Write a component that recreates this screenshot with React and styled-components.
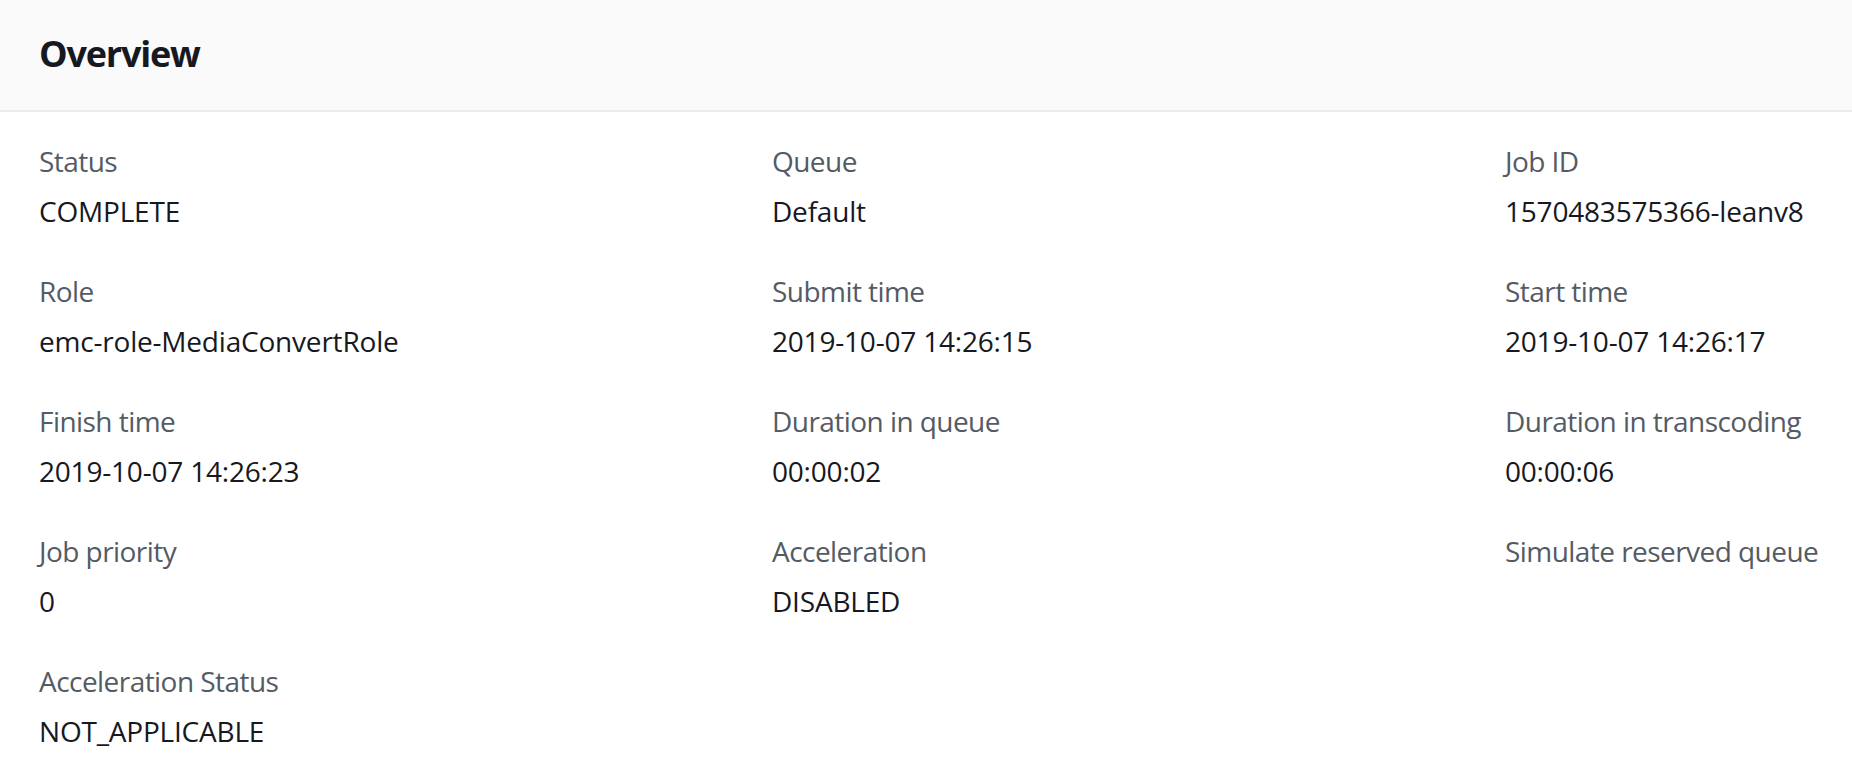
import React from "react";
import styled, { createGlobalStyle } from "styled-components";

const Global = createGlobalStyle`
  html, body { margin: 0; padding: 0; background: #ffffff; }
  body { font-family: "Open Sans", "Noto Sans", sans-serif; overflow: hidden; }
`;

const Panel = styled.section`
  width: 1852px;
  min-height: 772px;
  background: #ffffff;
`;

const Header = styled.header`
  height: 110px;
  box-sizing: content-box;
  padding: 0 39px;
  background: #fafafa;
  border-bottom: 2px solid #eaeded;
  display: flex;
  align-items: center;
`;

const Title = styled.h2`
  margin: 0;
  padding-bottom: 3px;
  font-size: 36px;
  line-height: 44px;
  font-weight: 700;
  letter-spacing: -1.2px;
  color: #16191f;
`;

const Grid = styled.div`
  display: grid;
  grid-template-columns: 733px 733px minmax(0, 1fr);
  row-gap: 36px;
  padding: 27px 0 36px 39px;
`;

const Field = styled.div`
  display: flex;
  flex-direction: column;
  gap: 6px;
`;

const Label = styled.div`
  font-size: 28px;
  line-height: 44px;
  letter-spacing: -0.55px;
  color: #545b64;
  white-space: nowrap;
`;

const Value = styled.div`
  font-size: 28px;
  line-height: 44px;
  letter-spacing: -0.2px;
  color: #16191f;
  white-space: nowrap;
  min-height: 44px;
`;

const fields = [
  ["Status", "COMPLETE"],
  ["Queue", "Default"],
  ["Job ID", "1570483575366-leanv8"],
  ["Role", "emc-role-MediaConvertRole"],
  ["Submit time", "2019-10-07 14:26:15"],
  ["Start time", "2019-10-07 14:26:17"],
  ["Finish time", "2019-10-07 14:26:23"],
  ["Duration in queue", "00:00:02"],
  ["Duration in transcoding", "00:00:06"],
  ["Job priority", "0"],
  ["Acceleration", "DISABLED"],
  ["Simulate reserved queue", ""],
  ["Acceleration Status", "NOT_APPLICABLE"],
];

export default function App() {
  return (
    <>
      <Global />
      <Panel>
        <Header>
          <Title>Overview</Title>
        </Header>
        <Grid>
          {fields.map(([label, value]) => (
            <Field key={label}>
              <Label>{label}</Label>
              <Value>{value}</Value>
            </Field>
          ))}
        </Grid>
      </Panel>
    </>
  );
}
